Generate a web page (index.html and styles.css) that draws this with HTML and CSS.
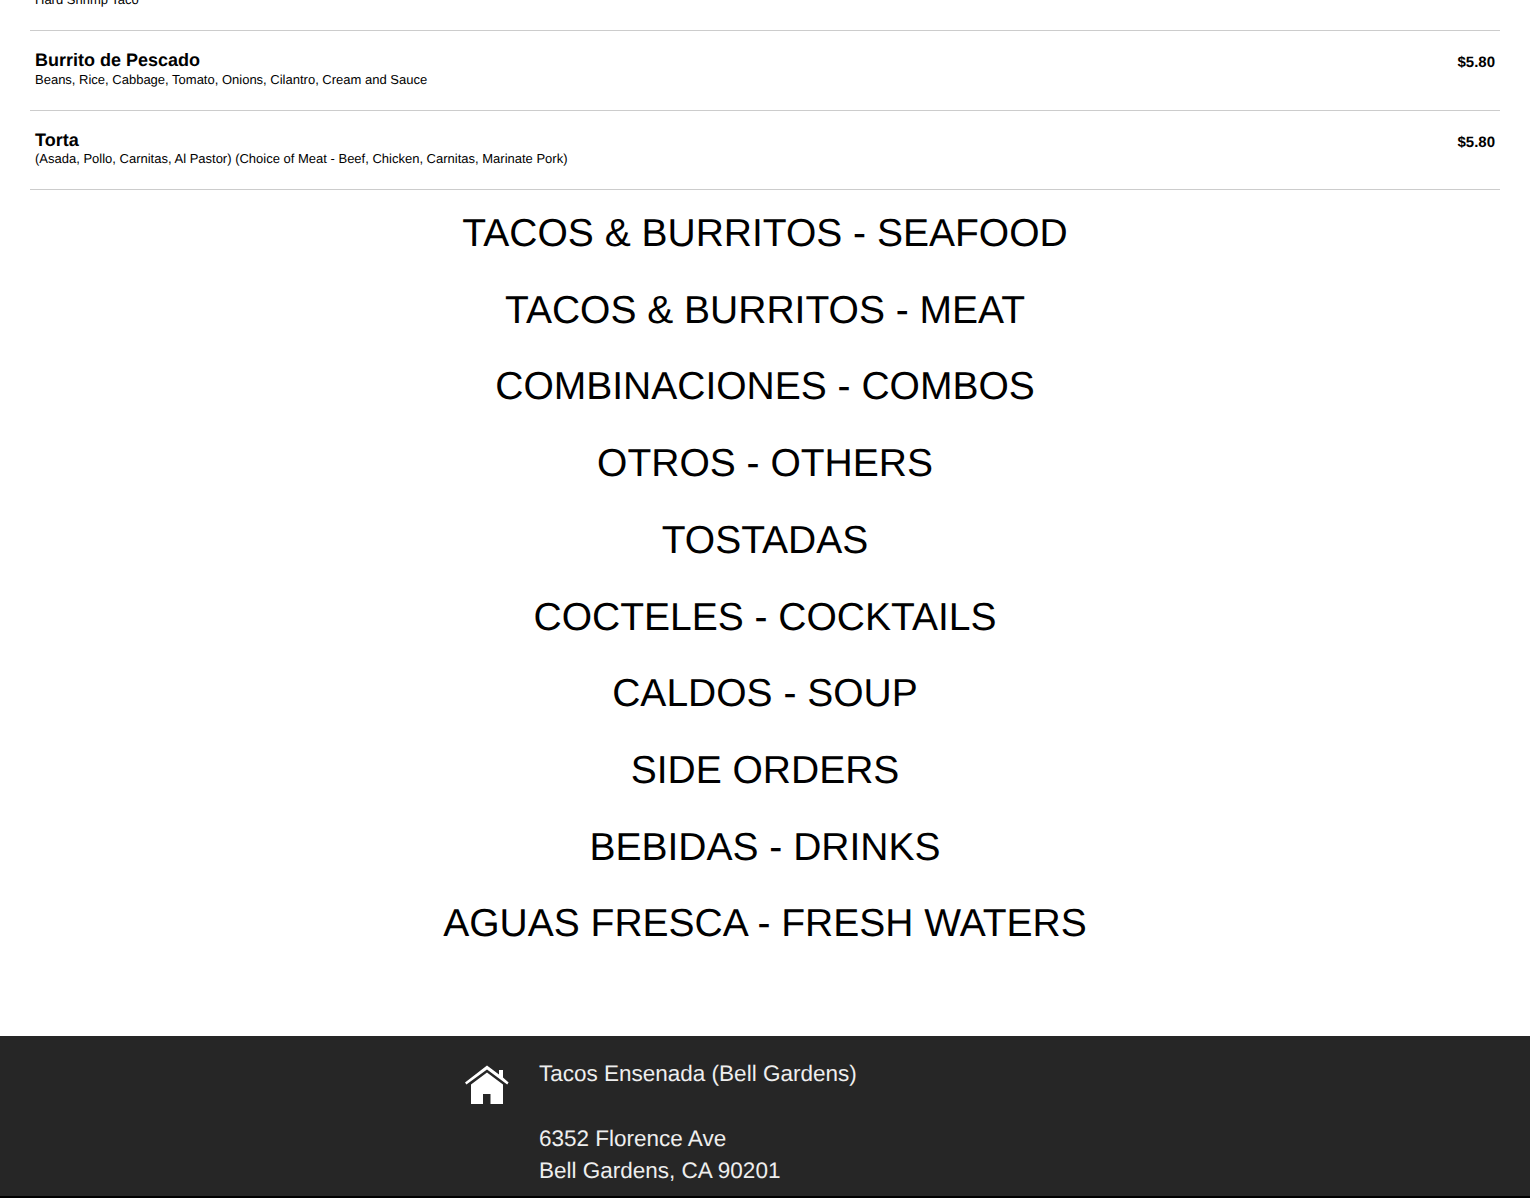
FILE: index.html
```html
<!DOCTYPE html>
<html lang="en">
<head>
    <meta charset="UTF-8">
    <title>Tacos Ensenada (Bell Gardens)</title>
    <link rel="stylesheet" href="styles.css">
</head>
<body>
    <div class="menu">
        <div class="menu-item first-item">
            <div class="item-info">
                <div class="item-desc">Hard Shrimp Taco</div>
            </div>
        </div>
        <div class="menu-item">
            <div class="item-info">
                <div class="item-name">Burrito de Pescado</div>
                <div class="item-desc">Beans, Rice, Cabbage, Tomato, Onions, Cilantro, Cream and Sauce</div>
            </div>
            <div class="item-price">$5.80</div>
        </div>
        <div class="menu-item">
            <div class="item-info">
                <div class="item-name">Torta</div>
                <div class="item-desc">(Asada, Pollo, Carnitas, Al Pastor) (Choice of Meat - Beef, Chicken, Carnitas, Marinate Pork)</div>
            </div>
            <div class="item-price">$5.80</div>
        </div>

        <h2 class="section-title">TACOS &amp; BURRITOS - SEAFOOD</h2>
        <h2 class="section-title">TACOS &amp; BURRITOS - MEAT</h2>
        <h2 class="section-title">COMBINACIONES - COMBOS</h2>
        <h2 class="section-title">OTROS - OTHERS</h2>
        <h2 class="section-title">TOSTADAS</h2>
        <h2 class="section-title">COCTELES - COCKTAILS</h2>
        <h2 class="section-title">CALDOS - SOUP</h2>
        <h2 class="section-title">SIDE ORDERS</h2>
        <h2 class="section-title">BEBIDAS - DRINKS</h2>
        <h2 class="section-title">AGUAS FRESCA - FRESH WATERS</h2>
    </div>

    <div class="footer">
        <div class="footer-inner">
            <svg class="home-icon" viewBox="0 0 44 40" aria-hidden="true">
                <path d="M22 0.5 L34 9.6 V5 H38 V12.6 L43.6 17.4 L42.2 19.6 L22 4.6 L1.4 19.6 L0 17.4 Z"/>
                <path d="M22 7.6 L38 19.4 V39 H25.5 V29 H18 V39 H6 V19.4 Z"/>
            </svg>
            <div class="address">
                <p>Tacos Ensenada (Bell Gardens)</p>
                <p>6352 Florence Ave<br>Bell Gardens, CA 90201</p>
            </div>
        </div>
    </div>
</body>
</html>
```

FILE: styles.css
```css
html, body {
    margin: 0;
    padding: 0;
    height: 100%;
    overflow: hidden;
}
body {
    font-family: "Liberation Sans", Arial, sans-serif;
    background-color: #fff;
    color: #000;
    text-rendering: geometricPrecision;
}
.menu {
    padding: 0 30px;
}
.menu-item {
    display: flex;
    justify-content: space-between;
    height: 78.6px;
    padding: 0 5px;
    border-bottom: 1px solid #ccc;
}
.first-item {
    height: 30px;
    align-items: flex-end;
}
.first-item .item-info {
    margin-bottom: 22px;
}
.item-info {
    padding-top: 19px;
}
.item-name {
    font-size: 18px;
    font-weight: bold;
    line-height: 20.6px;
}
.item-desc {
    font-size: 13px;
    line-height: 17px;
}
.item-price {
    font-size: 15px;
    font-weight: bold;
    padding-top: 23px;
}
.section-title {
    font-size: 39px;
    font-weight: normal;
    line-height: 44px;
    text-align: center;
    margin: 0 0 32.72px;
}
.menu .menu-item + .section-title {
    margin-top: 21.8px;
}
.footer {
    position: absolute;
    left: 0;
    right: 0;
    top: 1036px;
    height: 160px;
    background-color: #262626;
    border-bottom: 2px solid #000;
}
.footer-inner {
    display: flex;
    margin-left: 465px;
    padding-top: 22px;
    color: #eee;
    font-size: 22.5px;
    line-height: 32px;
}
.home-icon {
    width: 44px;
    height: 40px;
    margin-top: 7px;
    margin-right: 30px;
    fill: #fff;
}
.address p {
    margin: 0 0 33px;
}
```
